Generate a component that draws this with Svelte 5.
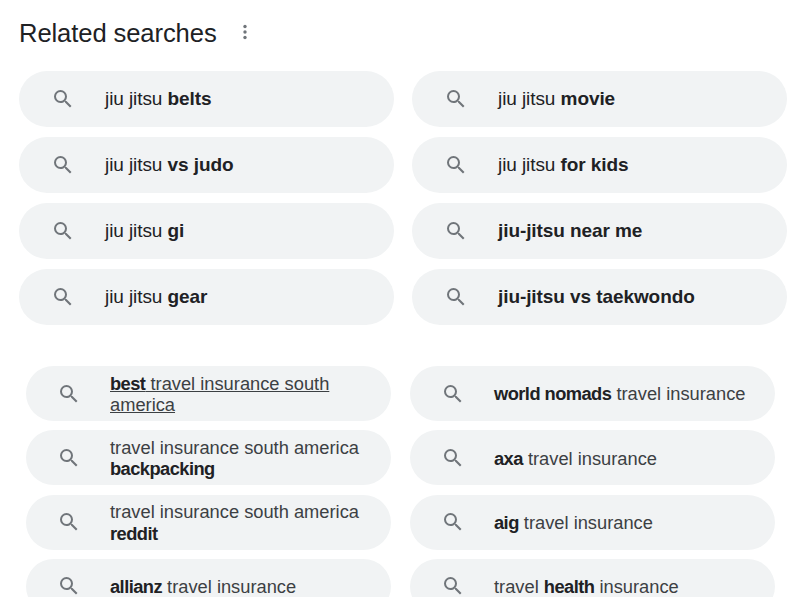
<script>
	const related = [
		[['jiu jitsu ', 0], ['belts', 1]],
		[['jiu jitsu ', 0], ['movie', 1]],
		[['jiu jitsu ', 0], ['vs judo', 1]],
		[['jiu jitsu ', 0], ['for kids', 1]],
		[['jiu jitsu ', 0], ['gi', 1]],
		[['jiu-jitsu near me', 1]],
		[['jiu jitsu ', 0], ['gear', 1]],
		[['jiu-jitsu vs taekwondo', 1]]
	];

	const travel = [
		{ parts: [['best', 1], [' travel insurance south america', 0]], hover: true },
		{ parts: [['world nomads', 1], [' travel insurance', 0]] },
		{ parts: [['travel insurance south america ', 0], ['backpacking', 1]] },
		{ parts: [['axa', 1], [' travel insurance', 0]] },
		{ parts: [['travel insurance south america ', 0], ['reddit', 1]] },
		{ parts: [['aig', 1], [' travel insurance', 0]] },
		{ parts: [['allianz', 1], [' travel insurance', 0]] },
		{ parts: [['travel ', 0], ['health', 1], [' insurance', 0]] }
	];
</script>

{#snippet searchIcon()}
	<svg class="icon" viewBox="0 0 24 24" aria-hidden="true">
		<path d="M15.5 14h-.79l-.28-.27A6.47 6.47 0 0 0 16 9.5 6.5 6.5 0 1 0 9.5 16c1.61 0 3.09-.59 4.23-1.57l.27.28v.79l5 4.99L20.49 19l-4.99-5zm-6 0C7.01 14 5 11.99 5 9.5S7.01 5 9.5 5 14 7.01 14 9.5 11.99 14 9.5 14z" />
	</svg>
{/snippet}

{#snippet label(parts)}
	{#each parts as [text, bold]}{#if bold}<b>{text}</b>{:else}{text}{/if}{/each}
{/snippet}

<main class="page">
	<section class="related">
		<header class="heading">
			<h2>Related searches</h2>
			<svg class="more" viewBox="0 0 4 16" aria-hidden="true">
				<circle cx="2" cy="2.5" r="1.7" />
				<circle cx="2" cy="8" r="1.7" />
				<circle cx="2" cy="13.5" r="1.7" />
			</svg>
		</header>
		<div class="grid">
			{#each related as parts}
				<div class="chip">
					{@render searchIcon()}
					<span class="text">{@render label(parts)}</span>
				</div>
			{/each}
		</div>
	</section>

	<section class="travel">
		<div class="grid">
			{#each travel as item}
				<div class="chip">
					{@render searchIcon()}
					<span class="text" class:hover={item.hover}>{@render label(item.parts)}</span>
				</div>
			{/each}
		</div>
	</section>
</main>

<style>
	:global(body) {
		background: #fff;
	}

	.page {
		box-sizing: border-box;
		font-family: 'Liberation Sans', Arial, sans-serif;
		color: #202124;
		height: 597px;
		overflow: hidden;
		width: 800px;
	}

	.related {
		padding: 16px 13px 0 19px;
	}

	.heading {
		align-items: center;
		display: flex;
		gap: 26px;
		height: 34px;
		margin-bottom: 21px;
	}

	h2 {
		font-size: 25.6px;
		font-weight: 400;
		letter-spacing: -0.1px;
		margin: 0;
	}

	.more {
		fill: #70757a;
		height: 16px;
		margin-top: -2px;
		width: 4px;
	}

	.related .grid {
		column-gap: 18px;
		display: grid;
		grid-template-columns: 375px 375px;
		row-gap: 10px;
	}

	.related .chip {
		height: 56px;
		padding-left: 32px;
	}

	.related .icon {
		margin-right: 30px;
	}

	.related .text {
		font-size: 19px;
		letter-spacing: -0.08px;
	}

	.travel {
		padding: 41px 25px 0 26px;
	}

	.travel .grid {
		column-gap: 19px;
		display: grid;
		grid-template-columns: 365px 365px;
		row-gap: 9.3px;
	}

	.travel .chip {
		height: 55px;
		padding-left: 31px;
	}

	.travel .icon {
		margin-right: 29px;
	}

	.travel .text {
		color: #3c4043;
		font-size: 18.3px;
		line-height: 21.5px;
		margin-top: 1px;
	}

	.travel b {
		color: #202124;
		letter-spacing: -0.55px;
	}

	.travel .hover {
		text-decoration: underline;
	}

	.chip {
		align-items: center;
		background: #f1f3f4;
		border-radius: 28px;
		box-sizing: border-box;
		display: flex;
	}

	.icon {
		fill: #70757a;
		flex: none;
		height: 24px;
		width: 24px;
	}

	.text {
		padding-right: 24px;
	}
</style>
